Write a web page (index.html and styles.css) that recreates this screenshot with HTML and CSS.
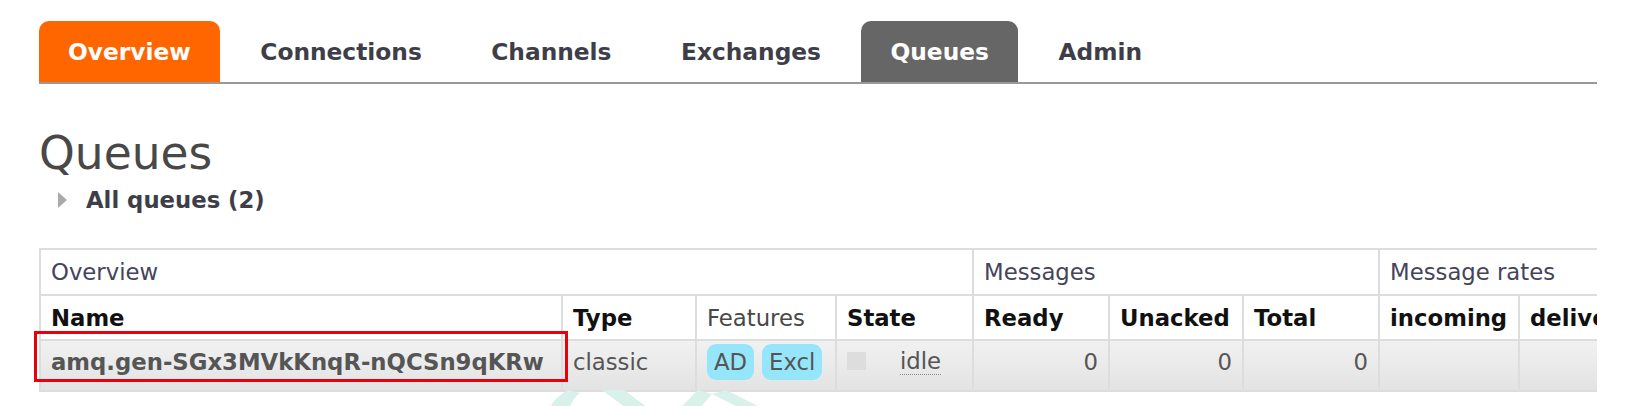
FILE: index.html
```html
<!DOCTYPE html>
<html>
<head>
<meta charset="utf-8">
<link rel="stylesheet" href="styles.css">
</head>
<body>
<div class="page">
  <ul class="tabs">
    <li class="tab tab-orange">Overview</li>
    <li class="tab">Connections</li>
    <li class="tab">Channels</li>
    <li class="tab">Exchanges</li>
    <li class="tab tab-grey">Queues</li>
    <li class="tab">Admin</li>
  </ul>
  <h1 class="title">Queues</h1>
  <div class="section-toggle"><span class="tri"></span>All queues (2)</div>
  <div class="table-wrap">
    <table class="list">
      <colgroup>
        <col class="c-name"><col class="c-type"><col class="c-feat"><col class="c-state">
        <col class="c-num"><col class="c-num2"><col class="c-num"><col class="c-rate"><col class="c-rate">
      </colgroup>
      <tr class="group">
        <th colspan="4">Overview</th>
        <th colspan="3">Messages</th>
        <th colspan="2">Message rates</th>
      </tr>
      <tr class="head">
        <th class="b">Name</th>
        <th class="b">Type</th>
        <th>Features</th>
        <th class="b">State</th>
        <th class="b">Ready</th>
        <th class="b">Unacked</th>
        <th class="b">Total</th>
        <th class="b">incoming</th>
        <th class="b nowrap">deliver / get</th>
      </tr>
      <tr class="row">
        <td class="name"><span class="mark"></span>amq.gen-SGx3MVkKnqR-nQCSn9qKRw</td>
        <td class="type">classic</td>
        <td><span class="badge">AD</span><span class="badge">Excl</span></td>
        <td><span class="state"><span class="sq"></span><abbr class="idle">idle</abbr></span></td>
        <td class="r">0</td>
        <td class="r">0</td>
        <td class="r">0</td>
        <td></td>
        <td></td>
      </tr>
    </table>
    <svg class="watermark" width="260" height="20" viewBox="0 0 260 20">
      <path d="M28 2 C18 8 12 14 10 20 L30 20 C31 14 35 9 40 5 Z" fill="#d8f1ea"/>
      <path d="M62 2 L84 2 L108 20 L86 20 Z" fill="#d8f1ea"/>
      <path d="M140 20 L160 20 L172 6 L158 2 Z" fill="#d8f1ea"/>
      <path d="M172 6 L186 2 L222 20 L200 20 Z" fill="#d8f1ea"/>
    </svg>
  </div>
</div>
</body>
</html>
```

FILE: styles.css
```css
html, body {
  margin: 0;
  padding: 0;
  background: #fff;
}
body {
  font-family: "DejaVu Sans", Verdana, sans-serif;
  font-size: 22.75px;
  color: #484848;
}
.page {
  padding: 21px 0 0 39px;
  width: 1558px;
}
.tabs {
  list-style: none;
  margin: 0;
  padding: 0;
  display: flex;
  height: 61px;
  border-bottom: 2px solid #999;
}
.tab {
  display: flex;
  align-items: center;
  padding: 0 29px;
  margin-right: 11.5px;
  font-size: 23.3px;
  font-weight: bold;
  color: #3e3e48;
  border-radius: 10px 10px 0 0;
}
.tab-orange {
  background: #ff6600;
  color: #fff;
}
.tab-grey {
  background: #666;
  color: #fff;
}
.title {
  margin: 44px 0 0 0;
  font-size: 45.5px;
  font-weight: normal;
  line-height: 52px;
  color: #484848;
}
.section-toggle {
  margin-top: 6px;
  display: flex;
  align-items: center;
  height: 28px;
  padding-left: 19px;
  font-weight: bold;
  color: #3e3e48;
}
.tri {
  width: 0;
  height: 0;
  border-top: 8px solid transparent;
  border-bottom: 8px solid transparent;
  border-left: 9px solid #aaa;
  margin-right: 19px;
}
.table-wrap {
  position: relative;
  margin-top: 34px;
  margin-left: -9px;
  padding-left: 9px;
  width: 1558px;
  overflow: hidden;
  height: 158px;
}
.list {
  table-layout: fixed;
  border-collapse: collapse;
  width: 1619px;
}
.c-name { width: 522px; }
.c-type { width: 134px; }
.c-feat { width: 140px; }
.c-state { width: 137px; }
.c-num { width: 136px; }
.c-num2 { width: 134px; }
.c-rate { width: 140px; }
.list th, .list td {
  border: 2px solid #ddd;
  padding: 0 10px;
  text-align: left;
  white-space: nowrap;
  overflow: hidden;
}
.list tr.group th {
  height: 44px;
  font-weight: normal;
  color: #44445a;
  overflow: visible;
}
.list tr.head th {
  height: 43px;
  font-weight: normal;
  color: #484848;
}
.list tr.head th.b {
  font-weight: bold;
  color: #111;
}
.list tr.row td {
  height: 41px;
  padding-bottom: 8px;
  background: linear-gradient(#f1f1f1, #e3e3e3);
  color: #555;
}
.list td.name {
  position: relative;
  overflow: visible;
  font-weight: bold;
  color: #111;
}
.mark {
  position: absolute;
  left: -7px;
  right: -7px;
  top: -10px;
  bottom: 8px;
  border: 3px solid #e8000b;
  pointer-events: none;
}
.list td.r {
  text-align: right;
}
.badge {
  display: inline-block;
  background: #96e6fb;
  border-radius: 9px;
  padding: 0 7px;
  height: 36px;
  line-height: 36px;
  margin-right: 8px;
  vertical-align: middle;
  color: #555;
}
.state {
  display: inline-flex;
  align-items: center;
}
.sq {
  width: 19px;
  height: 18px;
  background: #ddd;
  margin-right: 34px;
}
.idle {
  text-decoration: none;
  border-bottom: 1px dotted #888;
  line-height: 26px;
}
.watermark {
  position: absolute;
  left: 510px;
  top: 140px;
}
```
